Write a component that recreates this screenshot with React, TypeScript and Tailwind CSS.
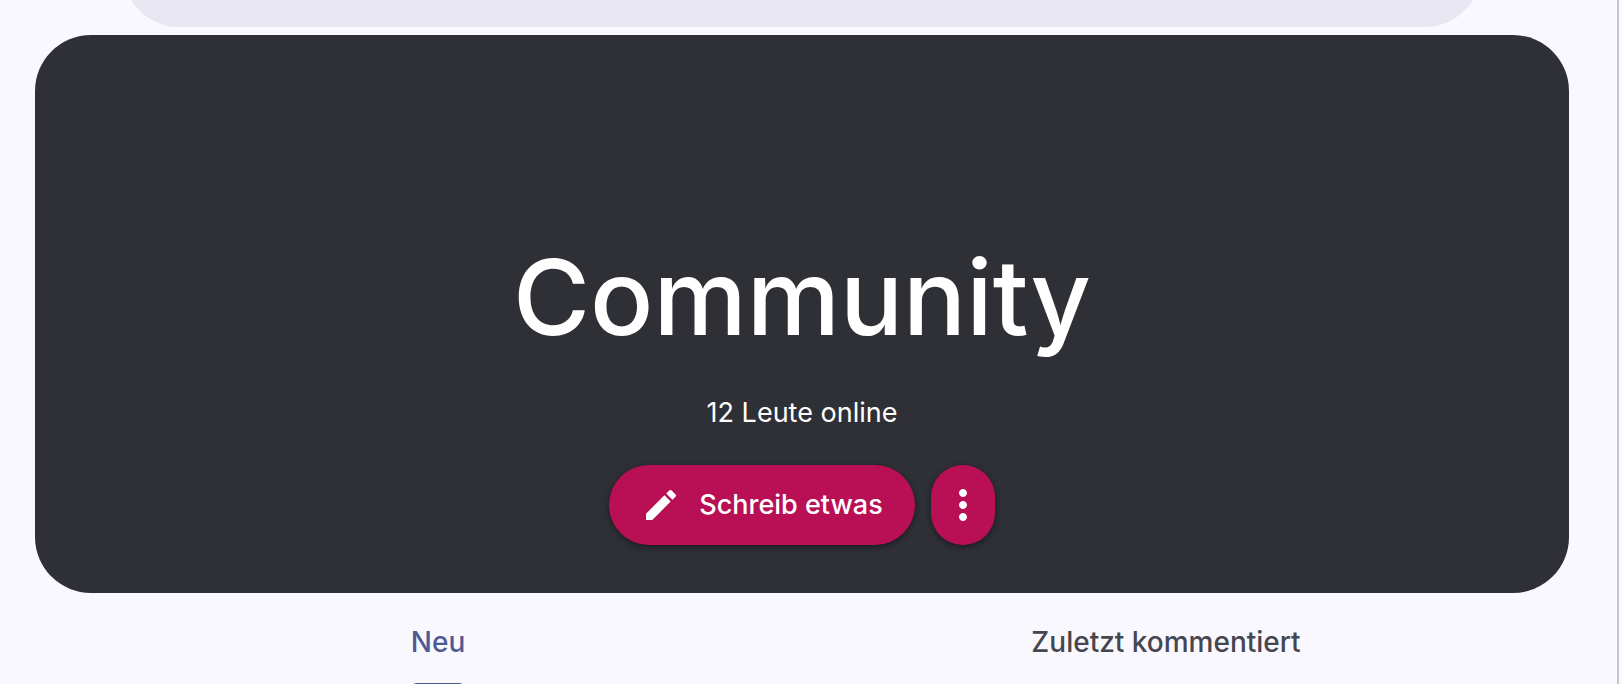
import { useState } from "react";
import { MdEdit, MdMoreVert } from "react-icons/md";

const tabs = ["Neu", "Zuletzt kommentiert"];

export default function App() {
  const [active, setActive] = useState<string>("Neu");

  return (
    <div className="flex h-screen overflow-hidden bg-[#f9f8ff] pr-[3px] font-['Inter',sans-serif]">
      <main className="flex min-w-0 flex-1 flex-col border-r-2 border-[#c6c5d0] pl-[35px] pr-12">
        {/* top bar, scrolled mostly out of view */}
        <header className="mx-[88px] -mt-[85px] h-28 shrink-0 rounded-[56px] bg-[#e8e6f0]" />

        <section className="mt-2 flex h-[558px] shrink-0 flex-col items-center justify-end rounded-[56px] bg-[#2f3036] pb-12 text-white">
          <h1 className="text-[105px] leading-[128px] font-medium">Community</h1>
          <p className="mt-8 text-[27px] leading-10">12 Leute online</p>
          <div className="mt-8 flex gap-4">
            <button
              type="button"
              className="flex h-20 items-center gap-[18px] rounded-[40px] bg-[#b90f54] px-8 text-[27px] font-medium shadow-[0_2px_6px_rgba(0,0,0,0.45)]"
            >
              <MdEdit size={40} />
              Schreib etwas
            </button>
            <button
              type="button"
              aria-label="Mehr"
              className="flex h-20 w-16 items-center justify-center rounded-[32px] bg-[#b90f54] shadow-[0_2px_6px_rgba(0,0,0,0.45)]"
            >
              <MdMoreVert size={48} />
            </button>
          </div>
        </section>

        <nav role="tablist" className="mx-[39px] grid shrink-0 grid-cols-2">
          {tabs.map((tab) => {
            const isActive = tab === active;

            return (
              <button
                key={tab}
                type="button"
                role="tab"
                aria-selected={isActive}
                onClick={() => setActive(tab)}
                className={`flex h-24 flex-col items-center text-[28px] font-medium
                ${isActive ? "text-[#4e5b92]" : "text-[#46464f]"}
                `}
              >
                <span className="flex h-24 flex-col items-center">
                  <span className="flex h-[90px] items-center pt-2">{tab}</span>
                  {isActive && <span className="h-[6px] w-full rounded-t-[6px] bg-[#4e5b92]" />}
                </span>
              </button>
            );
          })}
        </nav>
      </main>
    </div>
  );
}
